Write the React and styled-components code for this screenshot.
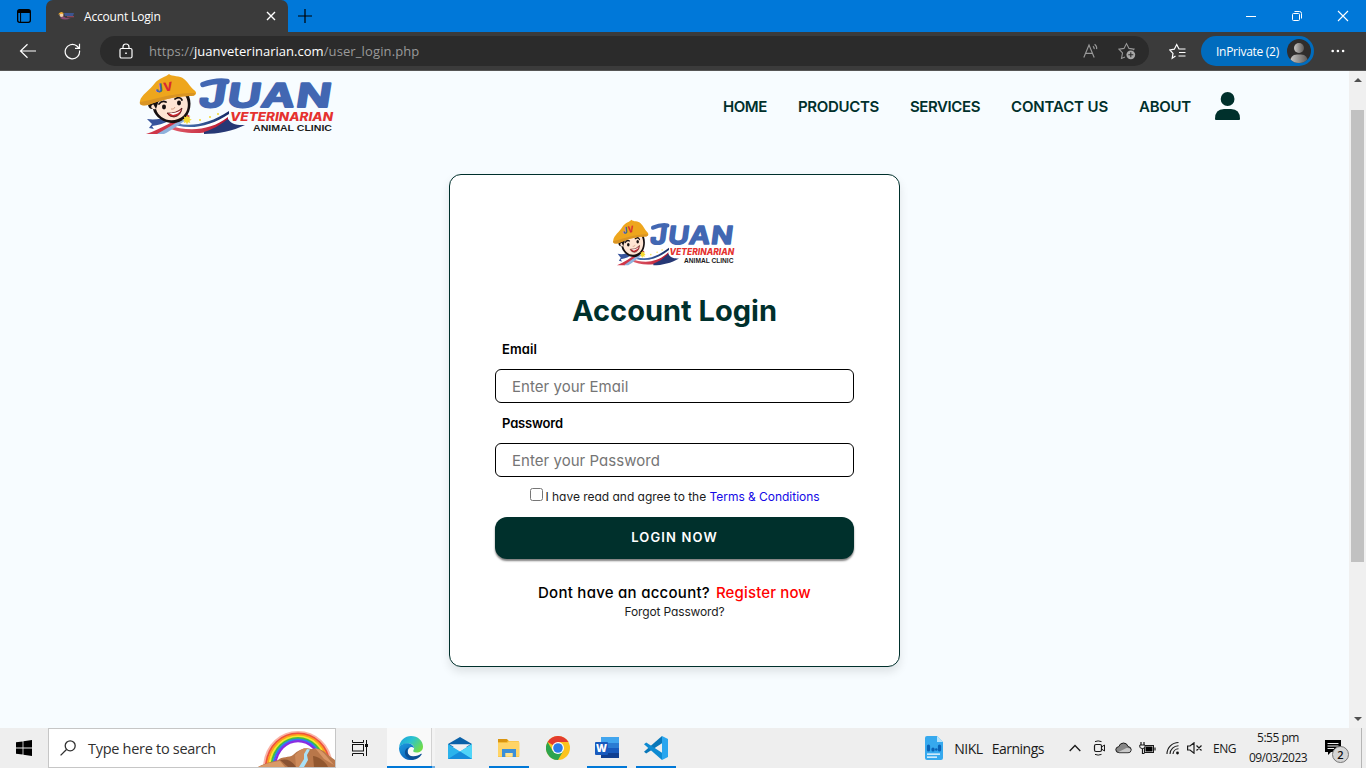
import React from "react";
import styled, { createGlobalStyle } from "styled-components";

const Global = createGlobalStyle`
  * { box-sizing: border-box; }
  body { margin: 0; overflow: hidden; background: #f7fcff; }
  svg { display: block; flex: none; }
`;

const ui = `"Open Sans", "Noto Sans", sans-serif`;
const brand = `Inter, "Open Sans", sans-serif`;

const Screen = styled.div`
  width: 1366px;
  height: 768px;
  display: grid;
  grid-template-rows: 32px 39px 657px 40px;
  overflow: hidden;
  font-family: ${ui};
`;

const Text = styled.span`
  font-size: ${(p) => p.$size || 12}px;
  font-weight: ${(p) => p.$weight || 400};
  letter-spacing: ${(p) => p.$track || 0}px;
  color: ${(p) => p.$color || "inherit"};
  white-space: pre;
`;

/* Browser chrome */
const TitleBar = styled.header`
  display: flex;
  align-items: flex-start;
  background: #0078d9;
  color: #000;
`;
const TabActions = styled.div`
  width: 46px;
  padding: 9px 0 0 17px;
`;
const Tab = styled.div`
  width: 242px;
  height: 32px;
  display: flex;
  align-items: center;
  padding: 0 11px 0 12px;
  border-radius: 7px 7px 0 0;
  background: #3b3b3b;
  color: #fff;
`;
const TabTitle = styled.div`
  flex: 1;
  padding-left: 8px;
  line-height: 30px;
`;
const NewTab = styled.div`
  flex: 1;
  padding: 9px 0 0 10px;
`;
const WindowButtons = styled.div`
  display: flex;
  gap: 34px;
  padding: 10px 17px 0 0;
  color: #fff;
`;
const ToolBar = styled.div`
  display: flex;
  align-items: center;
  padding-left: 19px;
  background: #3b3b3b;
  border-bottom: 1px solid #555;
  color: #fff;
`;
const Reload = styled.div`
  margin-left: 28px;
`;
const AddressBar = styled.div`
  width: 1049px;
  height: 30px;
  display: flex;
  align-items: center;
  margin-left: 19px;
  padding: 0 13px 0 18px;
  border-radius: 15px;
  background: #2b2b2b;
`;
const Url = styled.div`
  flex: 1;
  padding: 0 0 2px 15px;
  color: #9a9a9a;
`;
const AddressIcons = styled.div`
  display: flex;
  align-items: center;
  gap: 18px;
  color: #999;
`;
const Favorites = styled.div`
  margin-left: 20px;
`;
const PrivateBadge = styled.div`
  width: 113px;
  height: 30px;
  display: flex;
  align-items: center;
  justify-content: space-between;
  margin: 0 17px 0 15px;
  padding: 0 3px 0 15px;
  border-radius: 15px;
  background: #006cbe;
`;

/* Web page */
const Viewport = styled.div`
  display: grid;
  grid-template-columns: 1349px 17px;
  min-height: 0;
`;
const Page = styled.main`
  background: #f7fcff;
  color: #00302c;
  font-family: ${brand};
  font-feature-settings: "cv11";
`;
const PageHeader = styled.div`
  height: 72px;
  display: flex;
  align-items: flex-start;
  justify-content: space-between;
  padding: 2px 109px 0 138px;
`;
const Nav = styled.nav`
  height: 66px;
  display: flex;
  align-items: center;
  gap: 31px;
`;
const NavIcon = styled.div`
  margin-left: -7px;
`;
const Card = styled.section`
  width: 451px;
  height: 493px;
  display: flex;
  flex-direction: column;
  align-items: stretch;
  margin: 31px auto 0;
  padding: 44px 45px 40px;
  border: 1px solid #00302c;
  border-radius: 12px;
  background: #fff;
  box-shadow: 0 5px 10px rgba(0, 0, 0, 0.1);
`;
const CardLogo = styled.div`
  display: flex;
  justify-content: center;
  height: 48px;
  padding-right: 2px;
`;
const Title = styled.h1`
  margin: 20px 0 0;
  height: 42px;
  line-height: 48px;
  text-align: center;
  font-size: 29px;
  font-weight: 700;
`;
const Field = styled.label`
  display: flex;
  flex-direction: column;
  padding-top: 6px;
`;
const FieldName = styled.span`
  height: 34px;
  padding-left: 7px;
  line-height: 28px;
  font-size: 13px;
  font-weight: 600;
  letter-spacing: ${(p) => p.$track}px;
  color: #000;
`;
const Input = styled.input`
  height: 34px;
  padding: 1px 16px 0;
  border: 1px solid #000;
  border-radius: 6px;
  background: #fff;
  font: 400 15px ${brand};
  font-feature-settings: "cv11";
  letter-spacing: 0.04px;
  outline: none;
  &::placeholder { color: #757575; opacity: 1; }
`;
const Terms = styled.div`
  height: 40px;
  display: flex;
  align-items: center;
  justify-content: center;
  padding: 0 0 2px 1px;
  color: #1c1c1c;
`;
const Check = styled.input`
  width: 13px;
  height: 13px;
  margin: 0 2px 4px 0;
`;
const LoginButton = styled.button`
  height: 42px;
  padding: 0 0 2px;
  border: 0;
  border-radius: 12px;
  background: #00302c;
  color: #fff;
  font: 600 13px ${brand};
  letter-spacing: 1.15px;
  box-shadow: 0 2px 2px rgba(0, 0, 0, 0.5);
`;
const Register = styled.div`
  display: flex;
  justify-content: center;
  gap: 6px;
  margin-top: 24px;
  line-height: 20px;
  color: #000;
`;
const Forgot = styled.div`
  margin-top: 1px;
  text-align: center;
  font-size: 12px;
  line-height: 16px;
  color: #1c1c1c;
`;
const ScrollBar = styled.div`
  display: flex;
  flex-direction: column;
  align-items: center;
  justify-content: space-between;
  padding: 7px 0 7px;
  background: #f0f0f0;
`;
const ScrollTrack = styled.div`
  flex: 1;
  padding: 28px 0 0;
`;
const Thumb = styled.div`
  width: 13px;
  height: 452px;
  background: #c1c1c1;
`;

/* Taskbar */
const TaskBar = styled.footer`
  display: flex;
  align-items: stretch;
  background: #eee;
  color: #1a1a1a;
`;
const StartButton = styled.div`
  width: 48px;
  display: flex;
  align-items: center;
  justify-content: center;
`;
const SearchBox = styled.div`
  width: 288px;
  display: flex;
  align-items: center;
  padding-left: 11px;
  border: 1px solid #c6c6c6;
  background: #fff;
  color: #303030;
`;
const SearchLabel = styled.div`
  flex: 1;
  padding-left: 12px;
`;
const TaskView = styled.div`
  width: 51px;
  display: flex;
  align-items: center;
  padding-left: 16px;
`;
const AppSlot = styled.div`
  width: 49px;
  display: flex;
  flex-direction: column;
  align-items: center;
  justify-content: space-between;
  padding-top: 8px;
  background: ${(p) => (p.$active ? "linear-gradient(90deg, #f9f9f9 44px, #d2d2d2 44px 45px, #f3f3f3 45px 48px, #eee 48px)" : "none")};
`;
const AppIcon = styled.div`
  margin-right: 2px;
`;
const Underline = styled.i`
  width: ${(p) => (p.$wide ? 49 : 40)}px;
  height: 2px;
  margin-right: ${(p) => (p.$wide ? 0 : 2)}px;
  background: ${(p) => (p.$wide ? "linear-gradient(90deg, #0078d7 45px, #70b0e4 45px 48px, #eee 48px)" : p.$on ? "#0078d7" : "none")};
`;
const Tray = styled.div`
  flex: 1;
  display: flex;
  align-items: center;
  justify-content: flex-end;
`;
const TrayItem = styled.div`
  margin-right: ${(p) => p.$gap}px;
`;
const Language = styled.div`
  margin-right: 12px;
  padding-bottom: 2px;
`;
const Clock = styled.div`
  width: 60px;
  margin-right: 17px;
  padding-bottom: 2px;
  text-align: center;
  line-height: 18px;
`;
const Notices = styled.div`
  position: relative;
  width: 37px;
  height: 40px;
  padding: 12px 0 0;
  border-right: 1px solid #b5b5b5;
  margin-right: 4px;
`;
const Count = styled.span`
  position: absolute;
  left: 7px;
  top: 18px;
  width: 17px;
  height: 17px;
  border: 1px solid #777;
  border-radius: 50%;
  background: #d5d5d5;
  color: #111;
  text-align: center;
  font: 600 11px/15px ${ui};
`;

const Icon = ({ w, h, children, ...rest }) => (
  <svg width={w} height={h} viewBox={`0 0 ${w} ${h}`} fill="none" stroke="currentColor" {...rest}>
    {children}
  </svg>
);

const LogoSvg = styled.svg`
  overflow: visible;
`;

const Logo = ({ width, height }) => (
  <LogoSvg width={width} height={height} viewBox="0 0 198 62" preserveAspectRatio="none">
    <defs>
      <linearGradient id="blueRibbon" x1="0" x2="1">
        <stop offset="0" stopColor="#5b8fd0" />
        <stop offset="1" stopColor="#162a66" />
      </linearGradient>
      <linearGradient id="redRibbon" x1="0" x2="1">
        <stop offset="0" stopColor="#e2606c" />
        <stop offset="1" stopColor="#b8152e" />
      </linearGradient>
    </defs>
    {/* ribbons */}
    <path d="M29 46C46 56 68 53 91 38L91 43C74 54 50 59 28 50Z" fill="url(#blueRibbon)" />
    <path d="M28 49C48 58 70 55 91 41L91 46C75 58 48 60 29 53Z" fill="#fff" />
    <path d="M30 52C50 59 72 58 90 44L90 50C76 63 46 62 30 55Z" fill="url(#redRibbon)" />
    <path d="M66 59C79 55 84 50 90 46C94 52 99 52 107 52C95 58 80 61 66 61Z" fill="#263875" />
    <path d="M9 46C22 48 33 43 44 37L47 40C34 48 24 55 16 56L11 55L14 51Z" fill="#38549c" />
    <path d="M14 53C26 52 36 45 47 39L48 42C36 48 26 57 17 58Z" fill="#fff" />
    <path d="M8 61C24 56 36 47 48 41L52 43C39 50 31 58 20 61Z" fill="#cf3648" />
    <path d="M19 61C30 55 38 49 49 44L52 45C41 51 33 58 26 61Z" fill="#8fb2dd" />
    {/* head */}
    <path d="M12 28C10 24 53 15 51 23C55 33 51 45 41 49C31 53 17 46 15 36C11 37 8 31 12 28Z" fill="#171010" />
    <path d="M14 32L28 25L47 22C53 32 49 43 40 46C30 50 20 44 18 36C14 37 12 34 14 32Z" fill="#ffe5d3" />
    <path d="M14 29L21 27L18 36Z" fill="#171010" />
    <path d="M21 31Q24 27 28 29M37 26Q42 23 44 27" fill="none" stroke="#171010" strokeWidth="1.7" strokeLinecap="round" />
    <ellipse cx="26" cy="34" rx="2" ry="2.4" fill="#171010" />
    <ellipse cx="41" cy="30" rx="2" ry="2.4" fill="#171010" />
    <path d="M29 40Q38 41 44 35Q43 43 36 44Q31 44 29 40Z" fill="#c8262e" stroke="#4a1515" strokeWidth=".8" />
    <path d="M31 40.3Q38 40.5 43 37Q41 41 35 42Z" fill="#fff" />
    <path d="M33 36Q36 37 37 34" fill="none" stroke="#c98d6d" strokeWidth=".8" />
    {/* hat */}
    <path d="M2 28C3 22 12 17 17 10C21 5 28 4 31 1C34 4 42 2 46 6C51 10 52 14 56 17C60 20 58 23 52 23C38 23 23 27 10 32C4 33 1 32 2 28Z" fill="#eea61d" />
    <path d="M2 29C12 28 31 20 57 20C58 23 54 23 52 23C38 23 23 27 10 32C4 33 1 32 2 29Z" fill="#d99424" />
    <text x="17.5" y="18.5" fontFamily="Inter, sans-serif" fontWeight="800" fontSize="12" transform="rotate(-8 26 15)">
      <tspan fill="#3f65b5">J</tspan><tspan fill="#d92b31" dx="1">V</tspan>
    </text>
    {/* stars */}
    <path d="M49 42l1 2.3 2.3-.8-.8 2.3 2.3 1-2.3 1 .8 2.3-2.3-.8-1 2.3-1-2.3-2.3.8.8-2.3-2.3-1 2.3-1-.8-2.3 2.3.8Z" fill="#f4d92f" />
    <circle cx="62" cy="47" r="1" fill="#f4d92f" />
    <circle cx="72" cy="44" r="1" fill="#f4d92f" />
    <circle cx="80" cy="41" r="1" fill="#f4d92f" />
    {/* lettering */}
    <g fill="#4267b2" stroke="#4267b2" strokeLinejoin="round" strokeLinecap="round">
      <path d="M65 11.5Q78 7 89 8.5" fill="none" strokeWidth="5.5" />
      <g transform="translate(60 33.5) skewX(-9) scale(1.4 1)">
        <text fontFamily="Inter, sans-serif" fontWeight="600" fontSize="32.5" letterSpacing="1.2" strokeWidth="2.2">JUAN</text>
      </g>
    </g>
    <text x="92" y="47.5" fontFamily="Inter, sans-serif" fontStyle="italic" fontWeight="800" fontSize="11.5" textLength="103" lengthAdjust="spacingAndGlyphs" fill="#e5322f">VETERINARIAN</text>
    <text x="115" y="58.3" fontFamily="Liberation Sans, sans-serif" fontWeight="700" fontSize="8.6" textLength="79" lengthAdjust="spacingAndGlyphs" fill="#1b1b1b">ANIMAL CLINIC</text>
  </LogoSvg>
);

const Favicon = () => (
  <Icon w={18} h={10} stroke="none">
    <path d="M2 7Q7 10 13 7Q8 8 5 5Z" fill="#8a4a72" />
    <circle cx="3.5" cy="4" r="2" fill="#f0cfae" />
    <path d="M0 3.5Q3-1 6 2.5Z" fill="#f0aa2c" />
    <path d="M6 2h10l-1 3H7z" fill="#3c5590" />
    <path d="M9 5h7v1.3H9z" fill="#8c4557" />
  </Icon>
);

const EdgeIcon = () => (
  <svg width="24" height="24" viewBox="0 0 24 24">
    <defs>
      <linearGradient id="edgeTop" x1="0" y1="0" x2="1" y2=".6">
        <stop offset="0" stopColor="#1b9fe0" /><stop offset=".5" stopColor="#2cc3cf" /><stop offset="1" stopColor="#6fdc4b" />
      </linearGradient>
      <linearGradient id="edgeSide" x1="0" y1="0" x2=".6" y2="1">
        <stop offset="0" stopColor="#1d9ce0" /><stop offset="1" stopColor="#0c62b8" />
      </linearGradient>
    </defs>
    <path d="M0 11.5C1 4 6 0 12 0C19 0 24 5 24 10.5C24 14.5 21 16.5 17.5 16.5C14.5 16.5 13.5 15.3 14.6 14C16.4 11.2 13.8 7.6 9.3 7.6C5 7.6 1.5 9 0 11.5Z" fill="url(#edgeTop)" />
    <path d="M0 12C1 8.8 4.5 7.2 8.3 7.2C12 7.2 14.9 9.4 15.1 12C12 9.6 8.7 12 8.7 16C8.7 20 12 23.3 15.5 23.4C7 26 0 20 0 12Z" fill="url(#edgeSide)" />
    <path d="M10 11.2C6.9 14 8.3 20 14 20.3C17.6 20.4 20 19 22 17.8C22.6 17.5 23 17.9 22.6 18.4C20.5 21.8 17.5 23.5 14.5 23.7C9.5 23.7 5.6 20 5.9 16C6.1 13.6 7.7 12 10 11.2Z" fill="#0b4f94" />
  </svg>
);
const MailIcon = () => (
  <svg width="24" height="24" viewBox="0 0 24 24">
    <path d="M0 8L12 1L24 8V11H0Z" fill="#0b61a8" />
    <path d="M0 8L12 15.5L24 8V23H0Z" fill="#2bb3ec" />
    <path d="M24 8L12 15.5L24 23Z" fill="#50d5f8" />
    <path d="M0 23L12 15.5L24 23Z" fill="#168ddb" />
    <path d="M1.5 8.3H22.5L12 15Z" fill="#f1f1f3" />
  </svg>
);
const FolderIcon = () => (
  <svg width="22" height="24" viewBox="0 0 22 24">
    <path d="M0 4Q0 3 1 3H9L11 5H20Q21 5 21 6V21H0Z" fill="#f4bd38" />
    <path d="M0 3H8.5L10 4.5L8.7 6H0Z" fill="#d99410" />
    <path d="M0 7H9L11 5.5H20Q21.5 5.5 21.5 7V20.5H0Z" fill="#ffd466" />
    <path d="M4 13H18V21H14.5V17H7.5V21H4Z" fill="#3b8fd8" />
    <path d="M7.5 17H14.5V20.5H7.5Z" fill="#ffe391" />
  </svg>
);
const ChromeIcon = () => (
  <svg width="24" height="24" viewBox="0 0 24 24">
    <circle cx="12" cy="12" r="12" fill="#fcc31e" />
    <path d="M12 12L1.6 6A12 12 0 0 1 22.4 6H12Z" fill="#e33b2e" />
    <path d="M1.6 6A12 12 0 0 0 12 24L17.2 15L6.8 15Z" fill="#2da44e" />
    <circle cx="12" cy="12" r="6" fill="#fff" />
    <circle cx="12" cy="12" r="4.8" fill="#2b7be8" />
  </svg>
);
const WordIcon = () => (
  <svg width="24" height="24" viewBox="0 0 24 24">
    <path d="M6 1H24V7H6Z" fill="#41a5ee" /><path d="M6 7H24V12H6Z" fill="#2b7cd3" />
    <path d="M6 12H24V17H6Z" fill="#185abd" /><path d="M6 17H24V22H6Z" fill="#103f91" />
    <rect y="6" width="13" height="13" rx="1" fill="#185abd" />
    <text x="6.5" y="16.3" textAnchor="middle" fontFamily="Open Sans, sans-serif" fontWeight="800" fontSize="10.5" fill="#fff">W</text>
  </svg>
);
const CodeIcon = () => (
  <svg width="24" height="24" viewBox="0 0 24 24">
    <path d="M18 0L0 15.8L2.2 17.6L18 7.3Z" fill="#0877b9" />
    <path d="M18 24L0 8.2L2.2 6.4L18 16.7Z" fill="#0d8ad2" />
    <path d="M18 0L24 3V21L18 24Z" fill="#2aa6ef" />
  </svg>
);
const Rainbow = () => (
  <svg width="77" height="38" viewBox="0 0 77 38">
    {["#f9b4a6", "#f0503c", "#f9a11b", "#f7e62c", "#43bf3e", "#2f7df0", "#8a2be2"].map((c, i) => (
      <path key={c} d={`M${6 + i * 1.8} 38C${9 + i * 1.8} ${-8.5 + i * 2} ${71 - i * 1.8} ${-8.5 + i * 2} ${74 - i * 1.8} 38`} fill="none" stroke={c} strokeWidth="2.2" />
    ))}
    <path d="M0 38C7 34 14 33 20 31C24 27 31 29 35 26C41 20 48 18 53 20C60 18 67 22 70 26L77 31V38Z" fill="#b9774a" />
    <path d="M0 38C9 34 15 33 22 32L27 38Z" fill="#d99a68" />
    <path d="M22 31C30 29 34 32 38 38H30Z" fill="#8a5231" />
    <path d="M37 26C43 20 46 18 50 20L43 38H38Z" fill="#cd8a5a" />
    <path d="M57 19C65 21 68 27 76 36L66 30Z" fill="#d89667" />
    <path d="M55 27C60 27 68 33 70 38H56Z" fill="#92572f" />
    <path d="M49 20L52 20.5L49 26L50 31L46 38H41L46 30L46 25Z" fill="#a9e0f6" />
  </svg>
);

const NAV = [
  ["HOME", -0.41],
  ["PRODUCTS", -0.32],
  ["SERVICES", -0.41],
  ["CONTACT US", -0.14],
  ["ABOUT", -0.26],
];
const APPS = [
  { name: "edge", icon: <EdgeIcon />, wide: true },
  { name: "mail", icon: <MailIcon /> },
  { name: "files", icon: <FolderIcon />, on: true },
  { name: "chrome", icon: <ChromeIcon /> },
  { name: "word", icon: <WordIcon />, on: true },
  { name: "code", icon: <CodeIcon />, on: true },
];

const BrowserTop = () => (
  <TitleBar>
    <TabActions>
      <Icon w={14} h={14}>
        <rect x=".65" y=".65" width="12.7" height="12.7" rx="2" strokeWidth="1.3" />
        <path d="M3.6 4V13" /><path d="M1 2.5H13" strokeWidth="3" />
      </Icon>
    </TabActions>
    <Tab>
      <Favicon />
      <TabTitle><Text $size={12} $track={-0.17}>Account Login</Text></TabTitle>
      <Icon w={12} h={12}><path d="M2 2L10 10M10 2L2 10" strokeWidth="1.4" /></Icon>
    </Tab>
    <NewTab><Icon w={14} h={14}><path d="M7 0V14M0 7H14" strokeWidth="1.2" /></Icon></NewTab>
    <WindowButtons>
      <Icon w={12} h={12}><path d="M1 6.5H11" /></Icon>
      <Icon w={12} h={12}>
        <rect x="1.5" y="3.5" width="7" height="7" rx="1" />
        <path d="M3.5 1.5H8.5Q10.5 1.5 10.5 3.5V8.5" />
      </Icon>
      <Icon w={12} h={12}><path d="M1 1L11 11M11 1L1 11" strokeWidth="1.1" /></Icon>
    </WindowButtons>
  </TitleBar>
);

const BrowserTools = () => (
  <ToolBar>
    <Icon w={17} h={16}><path d="M17 8H2M8.5 1.2L1.5 8L8.5 14.8" strokeWidth="1.2" /></Icon>
    <Reload>
      <Icon w={17} h={17}>
        <path d="M15.5 7.5A7.2 7.2 0 1 1 12.6 2.8L15 5M15.5 .8V5.3H11" strokeWidth="1.2" />
      </Icon>
    </Reload>
    <AddressBar>
      <Icon w={16} h={16}>
        <rect x="2" y="5.5" width="12" height="9.5" rx="1.5" strokeWidth="1.2" />
        <path d="M5 5.5V4Q5 1 8 1Q11 1 11 4V5.5" strokeWidth="1.2" /><path d="M7.2 10.2H8.8" strokeWidth="1.6" />
      </Icon>
      <Url>
        <Text $size={13} $track={0.08}>https://</Text>
        <Text $size={13} $track={0.02} $color="#fff">juanveterinarian.com</Text>
        <Text $size={13} $track={0.12}>/user_login.php</Text>
      </Url>
      <AddressIcons>
        <Icon w={17} h={16}>
          <path d="M.8 14.5L6 2L11.2 14.5M2.5 10.3H9.5M10 3.2Q11.5 4.5 11.2 6.2M11.6 1.2Q14.2 3.3 13.6 6.2" strokeWidth="1.15" />
        </Icon>
        <Icon w={18} h={18}>
          <path d="M7 15L3.5 16.4L4.5 11L1 7.2L6 6.4L8.5 1.6L11 6.4L16 7.2L15 8.2" strokeWidth="1.1" />
          <circle cx="12.8" cy="12.8" r="4.4" fill="#a8a8a8" stroke="none" /><path d="M12.8 10.3V15.3M10.3 12.8H15.3" stroke="#2b2b2b" strokeWidth="1.1" />
        </Icon>
      </AddressIcons>
    </AddressBar>
    <Favorites>
      <Icon w={17} h={17}>
        <path d="M6.5 13L3.2 15.2L4 10.4L.8 6.9L5.3 6.2L7.7 1.5L10 6H16.5M10 9.5H16.5M9.5 13H16.5" strokeWidth="1.2" />
      </Icon>
    </Favorites>
    <PrivateBadge>
      <Text $size={12} $track={-0.28}>InPrivate (2)</Text>
      <svg width="24" height="24" viewBox="0 0 24 24">
        <defs>
          <linearGradient id="avatar"><stop offset="0" stopColor="#c9c7c5" /><stop offset="1" stopColor="#5d5a58" /></linearGradient>
          <clipPath id="avatarClip"><circle cx="12" cy="12" r="12" /></clipPath>
        </defs>
        <g clipPath="url(#avatarClip)">
          <rect width="24" height="24" fill="#2f2d2c" />
          <circle cx="12" cy="9" r="5" fill="url(#avatar)" />
          <path d="M3 24Q3 15.5 10 15.5H14Q21 15.5 21 24Z" fill="url(#avatar)" />
        </g>
      </svg>
    </PrivateBadge>
    <Icon w={14} h={4} fill="currentColor" stroke="none">
      <circle cx="1.7" cy="2" r="1.3" /><circle cx="6.9" cy="2" r="1.3" /><circle cx="12.1" cy="2" r="1.3" />
    </Icon>
  </ToolBar>
);

const LoginPage = () => (
  <Page>
    <PageHeader>
      <Logo width={198} height={62} />
      <Nav>
        {NAV.map(([label, track]) => (
          <Text key={label} $size={15} $weight={600} $track={track}>{label}</Text>
        ))}
        <NavIcon>
          <Icon w={25} h={28} fill="currentColor" stroke="none">
            <circle cx="12.6" cy="7" r="6.9" />
            <path d="M0 27Q0 17 9 17H16Q25 17 25 27Q25 28 24 28H1Q0 28 0 27Z" />
          </Icon>
        </NavIcon>
      </Nav>
    </PageHeader>
    <Card>
      <CardLogo><Logo width={124} height={47} /></CardLogo>
      <Title>Account Login</Title>
      <Field>
        <FieldName $track={0.1}>Email</FieldName>
        <Input placeholder="Enter your Email" />
      </Field>
      <Field>
        <FieldName $track={-0.16}>Password</FieldName>
        <Input placeholder="Enter your Password" />
      </Field>
      <Terms>
        <Check type="checkbox" />
        <Text $size={12} $track={-0.02}>I have read and agree to the </Text>
        <Text $size={12} $track={-0.03} $color="#1409e6">Terms &amp; Conditions</Text>
      </Terms>
      <LoginButton>LOGIN NOW</LoginButton>
      <Register>
        <Text $size={15} $weight={500} $track={0.26}>Dont have an account?</Text>
        <Text $size={15} $weight={500} $track={0.14} $color="#f00">Register now</Text>
      </Register>
      <Forgot><Text $size={12} $track={-0.14}>Forgot Password?</Text></Forgot>
    </Card>
  </Page>
);

const Bottom = () => (
  <TaskBar>
    <StartButton>
      <Icon w={16} h={16} fill="#000" stroke="none">
        <path d="M0 2.3L6.6 1.4V7.6H0ZM7.4 1.3L16 0V7.6H7.4ZM0 8.4H6.6V14.6L0 13.7ZM7.4 8.4H16V16L7.4 14.8Z" />
      </Icon>
    </StartButton>
    <SearchBox>
      <Icon w={16} h={16}><circle cx="10.2" cy="5.8" r="5" strokeWidth="1.3" /><path d="M6.5 9.5L.6 15.4" strokeWidth="1.3" /></Icon>
      <SearchLabel><Text $size={14.5} $track={-0.29}>Type here to search</Text></SearchLabel>
      <Rainbow />
    </SearchBox>
    <TaskView>
      <Icon w={17} h={16} stroke="#111">
        <path d="M.5 0V2.5H11.5V0M.5 16V13.5H11.5V16M14.5 0V16" />
        <rect x=".5" y="4.5" width="11" height="6.5" /><path d="M13 5.5H16" strokeWidth="3" />
      </Icon>
    </TaskView>
    {APPS.map((app) => (
      <AppSlot key={app.name} $active={app.wide}>
        <AppIcon>{app.icon}</AppIcon>
        <Underline $wide={app.wide} $on={app.on} />
      </AppSlot>
    ))}
    <Tray>
      <TrayItem $gap={10}>
        <svg width="20" height="24" viewBox="0 0 20 24">
          <path d="M1 2Q1 0 3 0H13L19 6V22Q19 24 17 24H3Q1 24 1 22Z" fill="#36a9ee" />
          <path d="M13 0L19 6H13Z" fill="#b6e3fb" />
          <path d="M4.5 10V14M9 13V14M15.5 10V14" stroke="#0a62b5" strokeWidth="3.2" strokeLinecap="round" />
          <circle cx="12.3" cy="13.5" r="1.3" fill="#0a62b5" />
          <path d="M3 18.2H16M3 21.2H13" stroke="#fff" strokeWidth="1.3" />
        </svg>
      </TrayItem>
      <TrayItem $gap={9}><Text $size={14} $track={-0.5}>NIKL</Text></TrayItem>
      <TrayItem $gap={25}><Text $size={14} $track={-0.5}>Earnings</Text></TrayItem>
      <TrayItem $gap={11}><Icon w={12} h={12}><path d="M.7 9L6 3.5L11.3 9" strokeWidth="1.3" /></Icon></TrayItem>
      <TrayItem $gap={9}>
        <Icon w={14} h={16}>
          <rect x="2.5" y="4.5" width="7" height="7" rx="1.5" strokeWidth="1.2" />
          <path d="M9.5 7L12.5 5V11L9.5 9M3 1.6Q6 .2 9.5 1.6M3 14.4Q6 15.8 9.5 14.4" />
        </Icon>
      </TrayItem>
      <TrayItem $gap={7}>
        <Icon w={17} h={12}>
          <path d="M4 10.7Q.7 10.5 .8 7.5Q1 5 3.7 4.7Q5 1 8.5 1Q12 1 13 4.5Q16.2 5 16.2 7.8Q16 10.7 13.2 10.7Z" fill="#888" />
          <path d="M3 10.3L11.5 6Q15.5 5.5 15.7 8Q15.5 10.3 13 10.3Z" fill="#c9c9c9" stroke="none" />
        </Icon>
      </TrayItem>
      <TrayItem $gap={10}>
        <Icon w={17} h={13}>
          <rect x="5.5" y="3.5" width="9" height="7" /><rect x="6.5" y="4.5" width="7" height="5" fill="#000" stroke="none" />
          <path d="M16 5.5V8.5M2 0V3M5 0V3M3.5 6V11.5H5.5" strokeWidth="1.2" />
          <path d="M.8 3H6V5Q5.5 6.5 3.5 6.5Q1 6.5 .8 5Z" fill="#eee" />
        </Icon>
      </TrayItem>
      <TrayItem $gap={7}>
        <Icon w={14} h={14}>
          <path d="M1 13A11.5 11.5 0 0 1 12.5 1.5M4 13A8.5 8.5 0 0 1 12.5 4.8M7 13A5.7 5.7 0 0 1 12.5 7.8" strokeWidth="1.1" />
          <circle cx="11.5" cy="12" r="1.4" fill="#111" stroke="none" />
        </Icon>
      </TrayItem>
      <TrayItem $gap={10}>
        <Icon w={16} h={12}><path d="M.6 4H3L7 .8V11.2L3 8H.6ZM9.5 3.5L14.5 8.5M14.5 3.5L9.5 8.5" strokeWidth="1.2" /></Icon>
      </TrayItem>
      <Language><Text $size={12} $track={-0.45}>ENG</Text></Language>
      <Clock>
        <Text $size={12} $track={-0.47}>5:55 pm</Text>
        <br />
        <Text $size={12} $track={-0.57}>09/03/2023</Text>
      </Clock>
      <Notices>
        <Icon w={17} h={16}>
          <path d="M0 0H16V12H6L3 15V12H0Z" fill="#000" stroke="none" /><path d="M2.5 3.5H13.5M2.5 6H13.5M2.5 8.5H9" stroke="#eee" />
        </Icon>
        <Count>2</Count>
      </Notices>
    </Tray>
  </TaskBar>
);

export default function App() {
  return (
    <>
      <Global />
      <Screen>
        <BrowserTop />
        <BrowserTools />
        <Viewport>
          <LoginPage />
          <ScrollBar>
            <Icon w={8} h={4} fill="#505050" stroke="none"><path d="M0 4L4 0L8 4Z" /></Icon>
            <ScrollTrack><Thumb /></ScrollTrack>
            <Icon w={8} h={4} fill="#505050" stroke="none"><path d="M0 0L4 4L8 0Z" /></Icon>
          </ScrollBar>
        </Viewport>
        <Bottom />
      </Screen>
    </>
  );
}
